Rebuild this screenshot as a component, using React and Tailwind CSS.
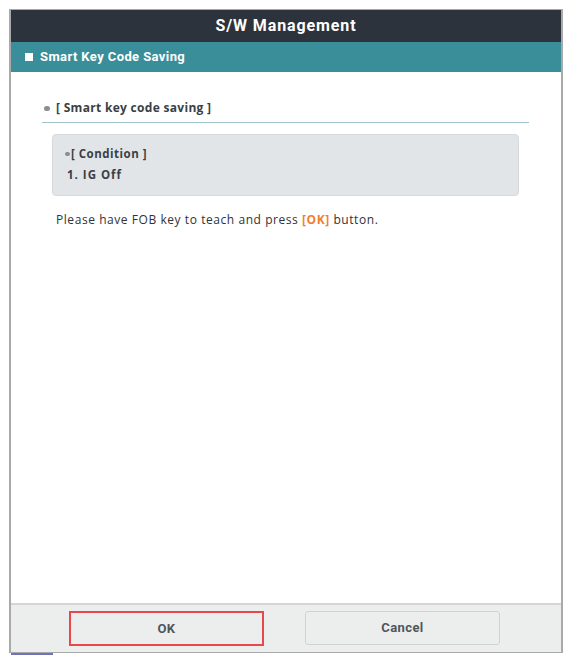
import React from 'react';

const App = () => {
  return (
    <div className="w-[571px] h-[662px] bg-white pt-[9px] pl-[9px]" style={{ fontFamily: 'Roboto, "Liberation Sans", sans-serif' }}>
      <div className="w-[554px] h-[644px] border-x-2 border-t border-b border-[#a9a9a9] flex flex-col relative">
        <div className="h-[32px] bg-[#2c333c] flex items-center justify-center">
          <span className="text-white text-[16px] font-bold tracking-[0.9px]">S/W Management</span>
        </div>
        <div className="h-[30px] bg-[#3a8e99] flex items-center pl-[14px] gap-[7px]">
          <span className="w-[8px] h-[8px] bg-white" />
          <span className="text-white text-[13px] font-bold tracking-[0.4px]">Smart Key Code Saving</span>
        </div>
        <div className="flex-1 bg-white pt-[27px] pl-[31px] pr-[31px]" style={{ fontFamily: '"Open Sans", Roboto, sans-serif' }}>
          <div className="flex items-center gap-[6px] pl-[2px] pb-[5px] border-b border-[#9fc3c8] w-[487px]">
            <span className="w-[6px] h-[5px] rounded-full bg-[#8a8f94]" />
            <span className="text-[12px] font-bold text-[#3a3f45] tracking-[0.3px]">[ Smart key code saving ]</span>
          </div>
          <div className="ml-[10px] mt-[11px] w-[467px] h-[62px] bg-[#e1e5e8] border border-[#d6dadd] rounded-[4px] pl-[12px] pt-[10px]">
            <div className="flex items-center gap-[1px]">
              <span className="w-[5px] h-[4px] rounded-full bg-[#8a8f94]" />
              <span className="text-[11.5px] font-bold text-[#3a3f45] tracking-[0.5px]">[ Condition ]</span>
            </div>
            <div className="text-[11.5px] font-bold text-[#3a3f45] mt-[4px] pl-[2px] tracking-[1px]">1. IG Off</div>
          </div>
          <div className="mt-[15px] pl-[14px] text-[12px] text-[#2e3338] tracking-[0.56px]">
            Please have FOB key to teach and press <span className="text-[#f0802a] font-bold">[OK]</span> button.
          </div>
        </div>
        <div className="h-[49px] bg-[#eceeee] border-t-2 border-[#d4d6d6] flex items-start pt-[6px] pl-[58px] gap-[41px]">
          <button className="w-[195px] h-[35px] bg-[#eceeee] border-2 border-[#e8474b] text-[13px] font-bold text-[#50565c] tracking-[0.4px]">OK</button>
          <button className="w-[195px] h-[34px] bg-[#eceeee] border border-[#cfd2d3] rounded-[3px] text-[13px] font-bold text-[#50565c] tracking-[0.4px]">Cancel</button>
        </div>
        <div className="absolute left-0 bottom-[-3px] w-[42px] h-[2px] bg-[#6f74b8]" />
      </div>
    </div>
  );
};

export default App;
